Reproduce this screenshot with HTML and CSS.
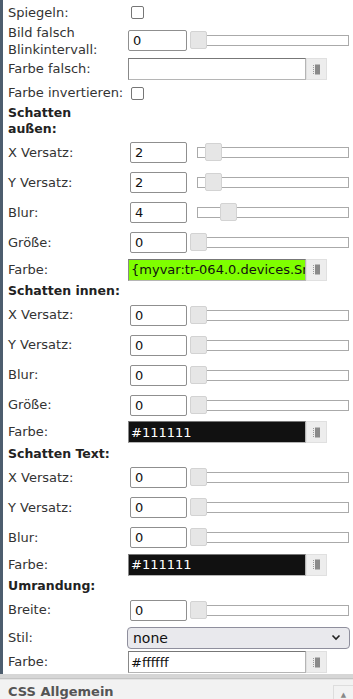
FILE: index.html
```html
<!DOCTYPE html>
<html>
<head>
<meta charset="utf-8">
<link rel="stylesheet" href="styles.css">
</head>
<body>
<div class="panel">
  <div class="row r-chk"><span class="lbl">Spiegeln:</span><span class="chk"></span></div>
  <div class="row r-two"><span class="lbl lbl-two">Bild falsch<br>Blinkintervall:</span><input class="num num-wide" value="0"><div class="slider"><div class="track"></div><span class="handle" style="left:0%"></span></div></div>
  <div class="row r-col"><span class="lbl">Farbe falsch:</span><input class="col" value=""><span class="pick"><svg width="8" height="11" viewBox="0 0 8 11"><rect x="2" y="0.5" width="5" height="10" fill="#8a8a8a"/><rect x="0" y="1" width="1" height="1" fill="#999"/><rect x="0" y="3" width="1" height="1" fill="#999"/><rect x="0" y="5" width="1" height="1" fill="#999"/><rect x="0" y="7" width="1" height="1" fill="#999"/><rect x="0" y="9" width="1" height="1" fill="#999"/></svg></span></div>
  <div class="row r-chk"><span class="lbl">Farbe invertieren:</span><span class="chk"></span></div>
  <div class="row r-head2"><span class="head">Schatten<br>außen:</span></div>
  <div class="row r-sl"><span class="lbl">X Versatz:</span><input class="num" value="2"><div class="slider"><div class="track"></div><span class="handle" style="left:10%"></span></div></div>
  <div class="row r-sl"><span class="lbl">Y Versatz:</span><input class="num" value="2"><div class="slider"><div class="track"></div><span class="handle" style="left:10%"></span></div></div>
  <div class="row r-sl"><span class="lbl">Blur:</span><input class="num" value="4"><div class="slider"><div class="track"></div><span class="handle" style="left:20%"></span></div></div>
  <div class="row r-sl"><span class="lbl">Größe:</span><input class="num" value="0"><div class="slider"><div class="track"></div><span class="handle" style="left:0%"></span></div></div>
  <div class="row r-col"><span class="lbl">Farbe:</span><input class="col col-green" value="{myvar:tr-064.0.devices.Smartphone}"><span class="pick"><svg width="8" height="11" viewBox="0 0 8 11"><rect x="2" y="0.5" width="5" height="10" fill="#8a8a8a"/><rect x="0" y="1" width="1" height="1" fill="#999"/><rect x="0" y="3" width="1" height="1" fill="#999"/><rect x="0" y="5" width="1" height="1" fill="#999"/><rect x="0" y="7" width="1" height="1" fill="#999"/><rect x="0" y="9" width="1" height="1" fill="#999"/></svg></span></div>
  <div class="row r-head"><span class="head">Schatten innen:</span></div>
  <div class="row r-sl"><span class="lbl">X Versatz:</span><input class="num" value="0"><div class="slider"><div class="track"></div><span class="handle" style="left:0%"></span></div></div>
  <div class="row r-sl"><span class="lbl">Y Versatz:</span><input class="num" value="0"><div class="slider"><div class="track"></div><span class="handle" style="left:0%"></span></div></div>
  <div class="row r-sl"><span class="lbl">Blur:</span><input class="num" value="0"><div class="slider"><div class="track"></div><span class="handle" style="left:0%"></span></div></div>
  <div class="row r-sl"><span class="lbl">Größe:</span><input class="num" value="0"><div class="slider"><div class="track"></div><span class="handle" style="left:0%"></span></div></div>
  <div class="row r-col"><span class="lbl">Farbe:</span><input class="col col-dark" value="#111111"><span class="pick"><svg width="8" height="11" viewBox="0 0 8 11"><rect x="2" y="0.5" width="5" height="10" fill="#8a8a8a"/><rect x="0" y="1" width="1" height="1" fill="#999"/><rect x="0" y="3" width="1" height="1" fill="#999"/><rect x="0" y="5" width="1" height="1" fill="#999"/><rect x="0" y="7" width="1" height="1" fill="#999"/><rect x="0" y="9" width="1" height="1" fill="#999"/></svg></span></div>
  <div class="row r-head"><span class="head">Schatten Text:</span></div>
  <div class="row r-sl"><span class="lbl">X Versatz:</span><input class="num" value="0"><div class="slider"><div class="track"></div><span class="handle" style="left:0%"></span></div></div>
  <div class="row r-sl"><span class="lbl">Y Versatz:</span><input class="num" value="0"><div class="slider"><div class="track"></div><span class="handle" style="left:0%"></span></div></div>
  <div class="row r-sl"><span class="lbl">Blur:</span><input class="num" value="0"><div class="slider"><div class="track"></div><span class="handle" style="left:0%"></span></div></div>
  <div class="row r-col"><span class="lbl">Farbe:</span><input class="col col-dark" value="#111111"><span class="pick"><svg width="8" height="11" viewBox="0 0 8 11"><rect x="2" y="0.5" width="5" height="10" fill="#8a8a8a"/><rect x="0" y="1" width="1" height="1" fill="#999"/><rect x="0" y="3" width="1" height="1" fill="#999"/><rect x="0" y="5" width="1" height="1" fill="#999"/><rect x="0" y="7" width="1" height="1" fill="#999"/><rect x="0" y="9" width="1" height="1" fill="#999"/></svg></span></div>
  <div class="row r-head"><span class="head">Umrandung:</span></div>
  <div class="row r-sl"><span class="lbl">Breite:</span><input class="num" value="0"><div class="slider"><div class="track"></div><span class="handle" style="left:0%"></span></div></div>
  <div class="row r-sel"><span class="lbl">Stil:</span><div class="sel"><span>none</span><svg width="10" height="7" viewBox="0 0 10 7"><path d="M1.5 1.5 L5 5 L8.5 1.5" fill="none" stroke="#222" stroke-width="1.6"/></svg></div></div>
  <div class="row r-col"><span class="lbl">Farbe:</span><input class="col" value="#ffffff"><span class="pick"><svg width="8" height="11" viewBox="0 0 8 11"><rect x="2" y="0.5" width="5" height="10" fill="#8a8a8a"/><rect x="0" y="1" width="1" height="1" fill="#999"/><rect x="0" y="3" width="1" height="1" fill="#999"/><rect x="0" y="5" width="1" height="1" fill="#999"/><rect x="0" y="7" width="1" height="1" fill="#999"/><rect x="0" y="9" width="1" height="1" fill="#999"/></svg></span></div>
</div>
<div class="band"></div>
<div class="section-head"><span class="sh-title">CSS Allgemein</span><span class="sh-btn">▲</span></div>
</body>
</html>
```

FILE: styles.css
```css
html, body {
  margin: 0;
  padding: 0;
  background: #fff;
  font-family: "DejaVu Sans", Verdana, sans-serif;
  font-size: 13px;
  color: #333;
  overflow: hidden;
}

.panel {
  border-left: 3px solid #4d5d6e;
  padding: 1px 4px 0 5px;
}

.row {
  display: flex;
  align-items: center;
}

.r-chk { height: 23px; }
.r-two { height: 33px; }
.r-col { height: 24.5px; }
.r-head { height: 18px; }
.r-head2 { height: 33px; }
.r-sl { height: 30px; }
.r-sel { height: 25px; }

.lbl {
  width: 120px;
  flex: none;
  line-height: 16px;
  white-space: nowrap;
}

.lbl-two {
  line-height: 17px;
}

.head {
  font-weight: bold;
  font-size: 12.5px;
  color: #222;
  line-height: 16px;
}

.chk {
  width: 13px;
  height: 13px;
  box-sizing: border-box;
  border: 1px solid #767676;
  border-radius: 2px;
  margin-left: 3px;
  background: #fff;
}

.num {
  box-sizing: border-box;
  width: 57px;
  height: 21px;
  margin: 0 0 0 2px;
  padding: 0 0 0 4px;
  border: 1px solid #8f8f8f;
  border-radius: 2px;
  font-family: "DejaVu Sans", Verdana, sans-serif;
  font-size: 13px;
  color: #111;
  background: #fff;
}

.num-wide {
  width: 59px;
  margin-left: 0;
}

.slider {
  position: relative;
  flex: 1;
  margin-left: 10px;
  height: 11px;
}

.track {
  box-sizing: border-box;
  height: 11px;
  border: 1px solid #aaa;
  background: #fff;
}

.handle {
  position: absolute;
  top: -4px;
  width: 17px;
  height: 18px;
  box-sizing: border-box;
  margin-left: -7px;
  background: #e6e6e6;
  border: 1px solid #d3d3d3;
  border-radius: 2px;
}

.col {
  box-sizing: border-box;
  width: 178px;
  height: 22px;
  margin: 0;
  padding: 0 0 0 2px;
  border: 1px solid #b5b5b5;
  border-top-color: #777;
  border-left-color: #888;
  font-family: "DejaVu Sans", Verdana, sans-serif;
  font-size: 13px;
  color: #111;
  background: #fff;
}

.col-green {
  background: #7fff00;
}

.col-dark {
  background: #111111;
  color: #fff;
}

.pick {
  box-sizing: border-box;
  width: 21px;
  height: 22px;
  display: flex;
  align-items: center;
  justify-content: center;
  background: #ededed;
  border: 1px solid #e0e0e0;
}

.sel {
  box-sizing: border-box;
  flex: 1;
  height: 22px;
  margin-left: -1px;
  margin-right: -1px;
  display: flex;
  align-items: center;
  justify-content: space-between;
  padding: 0 8px 0 5px;
  background: #e9e9ed;
  border: 1px solid #8f8f9d;
  border-radius: 4px;
  font-size: 14px;
  color: #111;
}

.band {
  height: 4px;
  margin-top: -1px;
  background: #d6d6d6;
  border-bottom: 1px solid #c4c4c4;
}

.section-head {
  display: flex;
  align-items: center;
  justify-content: space-between;
  height: 24px;
  background: #f2f2f2;
  border-top: 1px solid #e4e4e4;
  padding-left: 8px;
}

.sh-title {
  font-weight: bold;
  font-size: 13px;
  color: #555;
}

.sh-btn {
  width: 19px;
  height: 18px;
  margin-top: 6px;
  display: flex;
  align-items: center;
  justify-content: center;
  border-left: 1px solid #ddd;
  border-top: 1px solid #ddd;
  font-size: 7px;
  color: #888;
}
```
